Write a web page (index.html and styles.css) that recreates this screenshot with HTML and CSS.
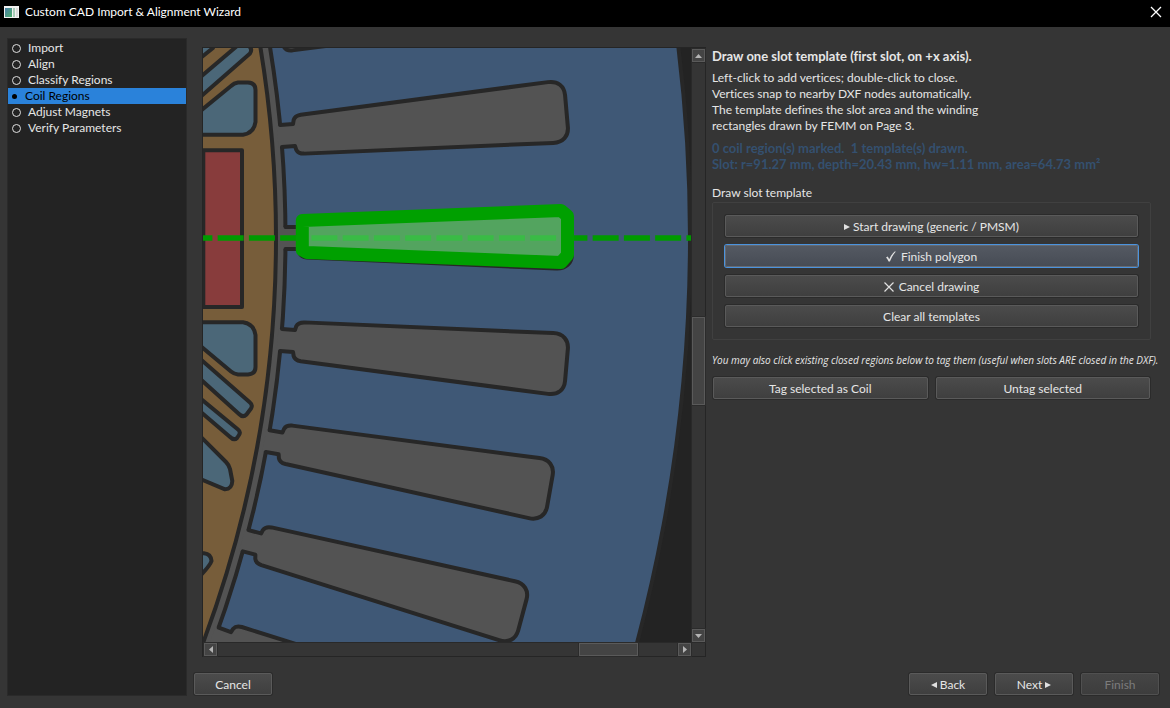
FILE: index.html
```html
<!DOCTYPE html>
<html lang="en">
<head>
<meta charset="utf-8">
<title>Custom CAD Import &amp; Alignment Wizard</title>
<link rel="stylesheet" href="styles.css">
</head>
<body>
<header class="titlebar">
  <svg class="app-icon" width="15" height="12" viewBox="0 0 15 12" aria-hidden="true">
    <defs><linearGradient id="appPane" x1="0" y1="0" x2="1" y2="1"><stop offset="0" stop-color="#4a7fa8"/><stop offset="1" stop-color="#4fae6c"/></linearGradient></defs>
    <rect width="15" height="12" fill="#f2f2f2"/>
    <rect x="1" y="2" width="7" height="9" fill="url(#appPane)"/>
    <rect x="9" y="2" width="2" height="9" fill="#a9cdb8"/>
    <rect x="12" y="2" width="2" height="9" fill="#dcdcdc"/>
  </svg>
  <h1 class="title">Custom CAD Import &amp; Alignment Wizard</h1>
  <button class="close" aria-label="Close"><svg width="12" height="12" viewBox="0 0 12 12"><path d="M1 1 11 11M11 1 1 11" stroke="#fff" stroke-width="1.3"/></svg></button>
</header>
<div class="wizard">
  <nav class="steps" aria-label="Wizard steps">
    <ol>
      <li><i class="ring"></i>Import</li>
      <li><i class="ring"></i>Align</li>
      <li><i class="ring"></i>Classify Regions</li>
      <li class="current" aria-current="step"><i class="dot"></i>Coil Regions</li>
      <li><i class="ring"></i>Adjust Magnets</li>
      <li><i class="ring"></i>Verify Parameters</li>
    </ol>
  </nav>
  <main class="page">
    <div class="content">
      <section class="viewer" aria-label="CAD view">
        <svg class="drawing" viewBox="203 48 488 594" preserveAspectRatio="xMidYMid slice">
          <defs>
            <g id="slot">
              <path fill="#535353" stroke="none" d="M282 227H299L300 223Q301 219 307 218.500L556 207.500C566 207 572 213 572 222V254C572 263 566 269 556 268.500L307 257.500Q301 257 300 253L299 249H282Z"/>
              <path d="M285.500 227H298.500L299.500 223Q301 219 307 218.500L556 207.500C566 207 572 213 572 222V254C572 263 566 269 556 268.500L307 257.500Q301 257 299.500 253L298.500 249H285.500"/>
            </g>
          </defs>
          <g stroke="#272727" stroke-width="4" stroke-linejoin="round" stroke-linecap="round" fill="none">
            <circle cx="-884" cy="238" r="1574" fill="#3f5876"/>
            <circle cx="-884" cy="238" r="1169.500" fill="#535353"/>
            <use href="#slot" transform="rotate(-10 -884 238)"/>
            <use href="#slot" transform="rotate(-5 -884 238)"/>
            <use href="#slot"/>
            <use href="#slot" transform="rotate(5 -884 238)"/>
            <use href="#slot" transform="rotate(10 -884 238)"/>
            <use href="#slot" transform="rotate(15 -884 238)"/>
            <use href="#slot" transform="rotate(20 -884 238)"/>
            <circle cx="-884" cy="238" r="1160" fill="#775d3a"/>
            <g fill="#4b6778">
              <path d="M198 60L213 48V40H198Z"/>
              <path d="M198 79L237 46L248 45Q253 49 250 53.500L198 99Z"/>
              <path d="M198 113L231 86Q234 83 238 82.500H248Q255.500 83 255.500 90V122Q254 133 243 134.700H198Z"/>
              <path d="M198 322.300H243Q254 324 255.500 335V367Q255.500 374 248 374.500H238Q234 374 231 371.500L198 344Z"/>
              <path d="M198 357L250 402.500Q253 405 251 408.500L246.500 414.500Q243 418 239 414L198 377Z"/>
              <path d="M198 396.500L238 429.500Q241 432 239 435L237 438Q234 441 229.500 436.500L198 409.500Z"/>
              <path d="M198 434L226 462Q229 465 230 469L232.300 481Q232 489 225 489.300L198 478Z"/>
              <path d="M198 553.300H204Q211 554 211.500 561Q210 566 198 578Z"/>
            </g>
            <path d="M203.300 150.300H242V307H203.300Z" fill="#883c3c"/>
          </g>
          <path d="M186.400 238H692" stroke="#009a00" stroke-width="5.600" stroke-dasharray="26 5.250"/>
          <path d="M302.300 220.500L561 210.500L567.500 216V255L561 262.500L307 252.500L302.300 250Z" fill="#54c965" fill-opacity=".69" />
          <path d="M302.300 220.500L561 210.500L567.500 216V255L561 262.500L307 252.500L302.300 250Z" fill="none" stroke="#00a000" stroke-width="13" stroke-linejoin="round"/>
        </svg>
        <div class="bar vertical">
          <button class="arrow" aria-label="Scroll up"><svg width="7" height="4" viewBox="0 0 7 4"><path d="M0 4 3.500 0 7 4Z"/></svg></button>
          <div class="track"><div class="thumb"></div></div>
          <button class="arrow" aria-label="Scroll down"><svg width="7" height="4" viewBox="0 0 7 4"><path d="M0 0 3.500 4 7 0Z"/></svg></button>
        </div>
        <div class="bar horizontal">
          <button class="arrow" aria-label="Scroll left"><svg width="4" height="7" viewBox="0 0 4 7"><path d="M4 0 0 3.500 4 7Z"/></svg></button>
          <div class="track"><div class="thumb"></div></div>
          <button class="arrow" aria-label="Scroll right"><svg width="4" height="7" viewBox="0 0 4 7"><path d="M0 0 4 3.500 0 7Z"/></svg></button>
        </div>
        <div class="corner"></div>
      </section>
      <section class="panel">
        <h2>Draw one slot template (first slot, on +x axis).</h2>
        <p>Left-click to add vertices; double-click to close.<br>Vertices snap to nearby DXF nodes automatically.<br>The template defines the slot area and the winding<br>rectangles drawn by FEMM on Page 3.</p>
        <p class="status">0 coil region(s) marked.&nbsp; 1 template(s) drawn.<br>Slot: r=91.27 mm, depth=20.43 mm, hw=1.11 mm, area=64.73 mm²</p>
        <h3 id="group-label">Draw slot template</h3>
        <div class="group" role="group" aria-labelledby="group-label">
          <button class="btn"><svg width="6" height="6" viewBox="0 0 6 6"><path d="M0 0 6 3 0 6Z"/></svg>Start drawing (generic / PMSM)</button>
          <button class="btn focused"><svg class="wide" width="10" height="11" viewBox="0 0 10 11"><path d="M0 6.500 1.800 5.600 3.200 8.200Q5.500 3 9 .3L9.700 .8Q6.200 4.500 3.900 10.500H2.600Q1.600 8 0 6.500Z"/></svg>Finish polygon</button>
          <button class="btn"><svg class="wide" width="10" height="10" viewBox="0 0 10 10"><path d="M.5 .5 9.500 9.500M9.500 .5 .5 9.500" stroke="#e0e0e0" stroke-width="1.200"/></svg>Cancel drawing</button>
          <button class="btn">Clear all templates</button>
        </div>
        <p class="hint">You may also click existing closed regions below to tag them (useful when slots ARE closed in the DXF).</p>
        <div class="pair">
          <button class="btn">Tag selected as Coil</button>
          <button class="btn">Untag selected</button>
        </div>
      </section>
    </div>
    <footer class="actions">
      <button class="btn">Cancel</button>
      <span class="spacer"></span>
      <button class="btn"><svg width="6" height="6" viewBox="0 0 6 6"><path d="M6 0 0 3 6 6Z"/></svg>Back</button>
      <button class="btn">Next<svg width="6" height="6" viewBox="0 0 6 6"><path d="M0 0 6 3 0 6Z"/></svg></button>
      <button class="btn" disabled>Finish</button>
    </footer>
  </main>
</div>
</body>
</html>
```
FILE: styles.css
```css
* { box-sizing: border-box; }
body {
  margin: 0;
  min-height: 100vh;
  display: flex;
  flex-direction: column;
  background: #353535;
  color: #e6e6e6;
  font: 12px/16px Lato, "Open Sans", sans-serif;
  font-variant-ligatures: none;
}
h1, h2, h3, p, ol { margin: 0; padding: 0; font-size: inherit; }
button { font: inherit; color: inherit; padding: 0; margin: 0; border: 0; background: none; }

.titlebar {
  display: flex;
  align-items: center;
  height: 27px;
  padding: 0 8px 4px 4px;
  background: #000;
  color: #fff;
}
.title { margin-left: 6px; font-weight: 400; flex: 1; }
.close { display: flex; }

.wizard { flex: 1; display: flex; gap: 7px; padding: 11px 11px 12px 7px; }
.steps {
  width: 180px;
  background: #232323;
  border: 1px solid #2a2a2a;
  padding-top: 1px;
}
.steps ol { list-style: none; }
.steps li { display: flex; align-items: center; height: 16px; padding-left: 4px; }
.steps .current { background: #2a82da; color: #000; }
.ring { width: 9px; height: 9px; border: 1px solid #e0e0e0; border-radius: 50%; margin-right: 7px; }
.dot { width: 5px; height: 5px; background: #000; border-radius: 50%; margin-right: 8px; }

.page { flex: 1; display: flex; flex-direction: column; gap: 16px; min-width: 0; }
.content { flex: 1; display: flex; gap: 6px; padding: 9px 8px 0; }
.viewer {
  flex: 1;
  min-width: 0;
  display: grid;
  grid-template-columns: minmax(0, 1fr) 13px;
  grid-template-rows: minmax(0, 1fr) 13px;
  gap: 1px;
  border: 1px solid #252525;
  background: #292929;
}
.drawing { width: 100%; height: 100%; min-height: 0; background: #232323; contain: size; }
.bar { display: flex; background: #353535; }
.vertical { flex-direction: column; padding-top: 1px; }
.horizontal { padding-left: 1px; }
.arrow {
  width: 13px;
  height: 13px;
  display: flex;
  align-items: center;
  justify-content: center;
  background: #444;
  border: 1px solid #5a5a5a;
  outline: 1px solid #2b2b2b;
}
.arrow svg { fill: #b4b4b4; }
.track { flex: 1; display: flex; }
.vertical .track { flex-direction: column; justify-content: flex-end; }
.horizontal .track { justify-content: flex-end; }
.thumb { background: #444; border: 1px solid #5a5a5a; outline: 1px solid #2b2b2b; }
.vertical .thumb { height: 88px; margin-bottom: 224px; }
.horizontal .thumb { width: 59px; margin-right: 40px; }
.corner { background: #353535; }

.panel { width: 439px; }
.panel h2 { margin: 1px 0 6px; font-size: 13px; }
.status { margin: 6px 0 13px; color: #34506f; font-size: 13px; font-weight: 700; }
.panel h3 { font-weight: 400; }
.group {
  display: flex;
  flex-direction: column;
  gap: 8px;
  margin-top: 1px;
  padding: 12px;
  border: 1px solid #404040;
  border-radius: 2px;
}
.btn {
  display: flex;
  align-items: center;
  justify-content: center;
  gap: 3px;
  height: 22px;
  padding-top: 1px;
  border: 1px solid #5a5a5a;
  border-radius: 2px;
  box-shadow: 0 0 0 1px #2b2b2b;
  background: linear-gradient(#4b4b4b, #3f3f3f);
}
.btn svg { fill: #e0e0e0; }
.btn .wide { margin-right: 2px; }
.focused {
  background: linear-gradient(#545962, #474c55);
  border-color: #656a72;
  box-shadow: 0 0 0 1px #4b93de;
}
.hint { margin-top: 12px; font-family: "Open Sans", sans-serif; font-size: 10px; font-style: italic; white-space: nowrap; }
.pair { display: flex; gap: 8px; margin: 9px 1px 0; }
.pair .btn { flex: 1; }

.actions { display: flex; gap: 8px; padding-bottom: 1px; }
.actions .btn { width: 78px; }
.spacer { flex: 1; }
.btn:disabled { color: #7c7c7c; background: linear-gradient(#454545, #3d3d3d); border-color: #505050; }
```
